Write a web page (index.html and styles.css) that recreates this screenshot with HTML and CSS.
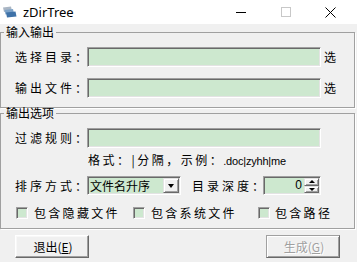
FILE: index.html
```html
<!DOCTYPE html>
<html lang="zh-CN">
<head>
<meta charset="utf-8">
<title>zDirTree</title>
<link rel="stylesheet" href="styles.css">
</head>
<body>
<div class="window">
  <div class="titlebar">
    <svg class="app-icon" width="15" height="12" viewBox="0 0 15 12">
      <path d="M1 1.5 L9 0.5 L10 5 L2 6 Z" fill="#aab6c4"/>
      <path d="M2.5 4 L11 3 L12 7.5 L3.5 8.5 Z" fill="#7da3c9"/>
      <path d="M4 6.5 L13.5 5.5 L14.5 10.5 L5 11.5 Z" fill="#3f72a8"/>
    </svg>
    <span class="title">zDirTree</span>
    <div class="controls">
      <div class="ctl"><span class="ctl-min"></span></div>
      <div class="ctl"><span class="ctl-max"></span></div>
      <div class="ctl">
        <svg width="11" height="11" viewBox="0 0 11 11"><path d="M0.5 0.5 L10.5 10.5 M10.5 0.5 L0.5 10.5" stroke="#000" stroke-width="1"/></svg>
      </div>
    </div>
  </div>
  <div class="client">
    <fieldset class="group g1">
      <legend>输入输出</legend>
      <div class="rows">
        <div class="field-row">
          <span class="lbl">选择目录：</span>
          <span class="txt"></span>
          <span class="pick">选</span>
        </div>
        <div class="field-row gap11">
          <span class="lbl">输出文件：</span>
          <span class="txt"></span>
          <span class="pick">选</span>
        </div>
      </div>
    </fieldset>
    <fieldset class="group g2">
      <legend>输出选项</legend>
      <div class="rows">
        <div class="field-row">
          <span class="lbl">过滤规则：</span>
          <span class="txt"></span>
        </div>
        <div class="hint">格式：|分隔，示例：<span class="eg">.doc|zyhh|me</span></div>
        <div class="field-row sort-row">
          <span class="lbl">排序方式：</span>
          <div class="combo">
            <span class="combo-text">文件名升序</span>
            <span class="dd"><span class="tri-down"></span></span>
          </div>
          <span class="lbl lbl2">目录深度：</span>
          <div class="spin">
            <span class="spin-val">0</span>
            <span class="spin-btns">
              <span class="sb"><span class="tri-up"></span></span>
              <span class="sb"><span class="tri-down small"></span></span>
            </span>
          </div>
        </div>
        <div class="check-row">
          <label class="chk c1"><span class="box"></span><span class="chk-text">包含隐藏文件</span></label>
          <label class="chk c2"><span class="box"></span><span class="chk-text">包含系统文件</span></label>
          <label class="chk c3"><span class="box"></span><span class="chk-text">包含路径</span></label>
        </div>
      </div>
    </fieldset>
    <div class="actions">
      <div class="btn">退出(<u>E</u>)</div>
      <div class="btn disabled">生成(<u>G</u>)</div>
    </div>
  </div>
</div>
</body>
</html>
```
FILE: styles.css
```css
html, body {
  margin: 0;
  padding: 0;
}
body {
  width: 357px;
  height: 262px;
  overflow: hidden;
  background: #f0f0f0;
  font-family: "Noto Sans CJK SC", "Noto Sans", sans-serif;
  font-size: 12px;
  color: #000;
}
.window {
  width: 357px;
  height: 262px;
  display: flex;
  flex-direction: column;
}
.titlebar {
  height: 24px;
  background: #fff;
  display: flex;
  align-items: center;
  flex: none;
}
.app-icon {
  margin-left: 2px;
  flex: none;
}
.title {
  margin-left: 6px;
  font-family: "Noto Sans", sans-serif;
  font-size: 13px;
  line-height: 24px;
  color: #000;
}
.controls {
  margin-left: auto;
  margin-right: 4px;
  display: flex;
  height: 24px;
}
.ctl {
  width: 45px;
  height: 24px;
  display: flex;
  align-items: center;
  justify-content: center;
}
.ctl-min {
  width: 10px;
  height: 1px;
  background: #000;
}
.ctl-max {
  width: 8px;
  height: 8px;
  border: 1px solid #c8c8c8;
}
.client {
  display: flex;
  flex-direction: column;
}
.group {
  margin: 2px 2px 0 0;
  padding: 9px 0 9px 0;
  border: 1px solid #a0a0a0;
  box-shadow: 1px 1px 0 #fff;
  min-width: 0;
}
.g2 {
  margin-top: -1px;
}
.group legend {
  margin-left: 3px;
  padding: 0 2px;
  font-size: 12px;
  line-height: 12px;
}
.rows {
  display: flex;
  flex-direction: column;
}
.field-row {
  display: flex;
  align-items: center;
  height: 20px;
  padding-left: 14px;
}
.gap11 {
  margin-top: 11px;
}
.lbl {
  width: 72px;
  flex: none;
  letter-spacing: 3px;
  white-space: nowrap;
  line-height: 14px;
}
.txt, .combo, .spin, .box {
  box-sizing: border-box;
  border: 1px solid;
  border-color: #a0a0a0 #fff #fff #a0a0a0;
  box-shadow: inset 1px 1px 0 #696969, inset -1px -1px 0 #e3e3e3;
  background: #cde8cf;
}
.txt {
  width: 234px;
  height: 20px;
  flex: none;
}
.pick {
  margin-left: 3px;
  line-height: 14px;
}
.hint {
  margin-top: 6px;
  padding-left: 87px;
  line-height: 12px;
  height: 12px;
  letter-spacing: 2.5px;
  white-space: nowrap;
}
.eg {
  font-family: "Liberation Sans", sans-serif;
  font-size: 11px;
  letter-spacing: -0.2px;
  margin-left: -1px;
}
.sort-row {
  margin-top: 10px;
  height: 19px;
}
.combo {
  width: 94px;
  height: 19px;
  flex: none;
  display: flex;
  align-items: center;
  padding: 1px 1px 1px 2px;
}
.combo-text {
  line-height: 14px;
  white-space: nowrap;
}
.dd, .sb {
  box-sizing: border-box;
  background: #f0f0f0;
  border: 1px solid;
  border-color: #e3e3e3 #696969 #696969 #e3e3e3;
  box-shadow: inset 1px 1px 0 #fff, inset -1px -1px 0 #a0a0a0;
  display: flex;
  align-items: center;
  justify-content: center;
}
.dd {
  margin-left: auto;
  width: 16px;
  height: 15px;
}
.tri-down {
  width: 0;
  height: 0;
  border-left: 3.5px solid transparent;
  border-right: 3.5px solid transparent;
  border-top: 4px solid #000;
}
.tri-down.small {
  border-left-width: 3px;
  border-right-width: 3px;
  border-top-width: 3px;
}
.tri-up {
  width: 0;
  height: 0;
  border-left: 3px solid transparent;
  border-right: 3px solid transparent;
  border-bottom: 3px solid #000;
}
.lbl2 {
  margin-left: 11px;
  width: 71px;
}
.spin {
  width: 58px;
  height: 19px;
  flex: none;
  display: flex;
  padding: 1px;
}
.spin-val {
  flex: 1;
  text-align: right;
  padding-right: 2px;
  font-family: "Liberation Sans", sans-serif;
  font-size: 12px;
  line-height: 15px;
}
.spin-btns {
  width: 15px;
  display: flex;
  flex-direction: column;
}
.sb {
  flex: 1;
}
.check-row {
  margin-top: 11px;
  height: 13px;
  display: flex;
  align-items: center;
  padding-left: 15px;
}
.chk {
  display: flex;
  align-items: center;
  flex: none;
}
.c1 {
  width: 117px;
}
.c2 {
  width: 125px;
}
.box {
  width: 12px;
  height: 12px;
  flex: none;
  margin-right: 6px;
}
.c3 .box {
  margin-right: 5px;
}
.chk-text {
  letter-spacing: 2.3px;
  line-height: 13px;
  white-space: nowrap;
}
.actions {
  display: flex;
  justify-content: space-between;
  padding: 0 17px 0 15px;
  margin-top: 6px;
}
.btn {
  box-sizing: border-box;
  width: 74px;
  height: 23px;
  display: flex;
  align-items: center;
  justify-content: center;
  background: #f0f0f0;
  border: 1px solid;
  border-color: #fff #696969 #696969 #fff;
  box-shadow: inset -1px -1px 0 #a0a0a0, inset 1px 1px 0 #f8f8f8;
  line-height: 14px;
  padding-left: 2px;
  white-space: nowrap;
}
.btn u {
  text-decoration-thickness: 1px;
  text-underline-offset: 1px;
}
.btn.disabled {
  color: #a0a0a0;
  text-shadow: 1px 1px 0 #fff;
  border-color: #a0a0a0 #696969 #696969 #a0a0a0;
  box-shadow: inset 1px 1px 0 #fff, inset -1px -1px 0 #a0a0a0;
}
```
